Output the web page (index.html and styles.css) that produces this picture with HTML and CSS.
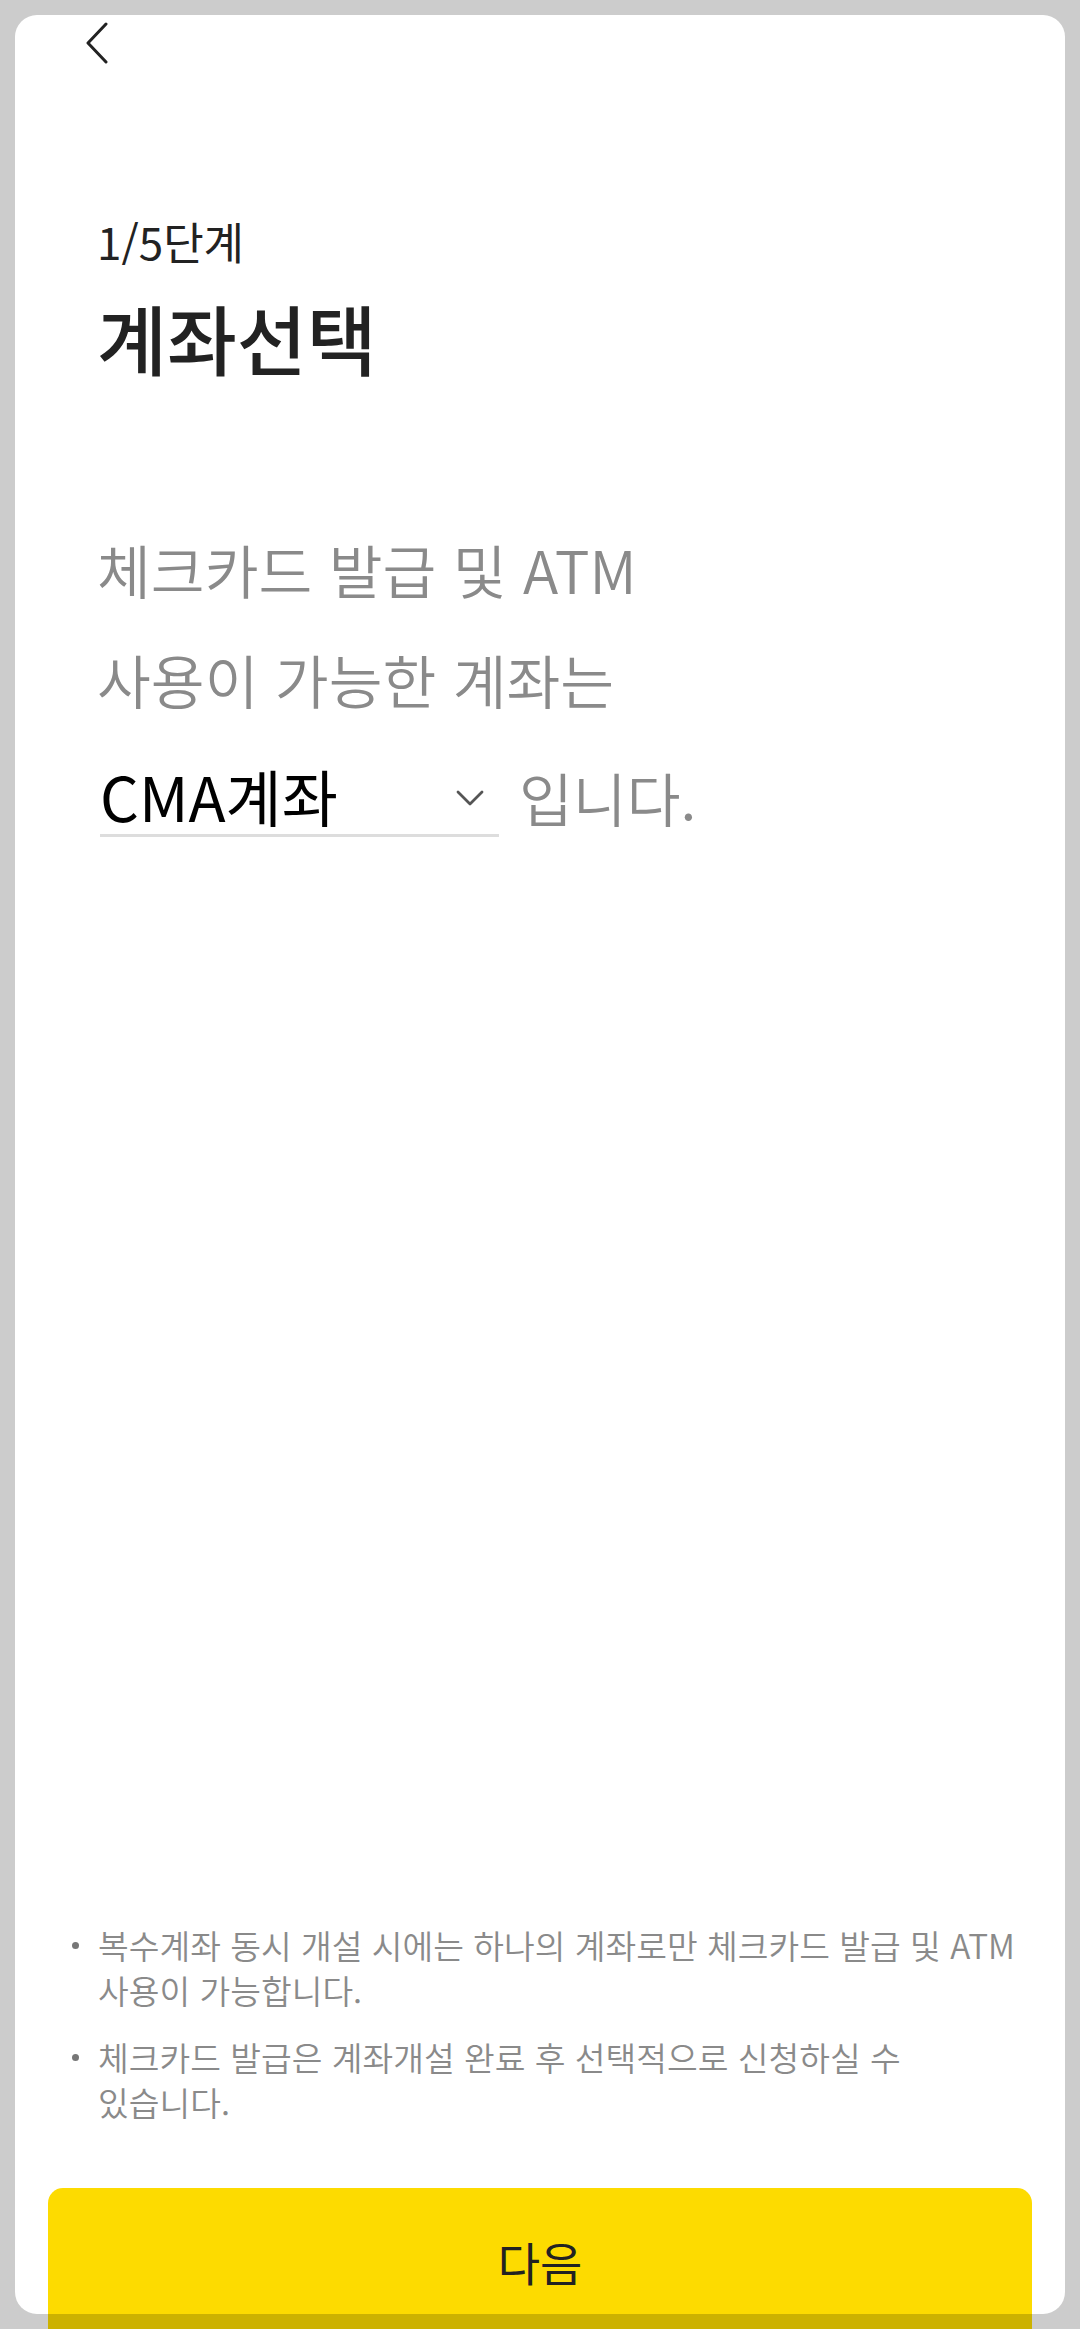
FILE: index.html
```html
<!DOCTYPE html>
<html lang="ko">
<head>
<meta charset="utf-8">
<title>계좌선택</title>
<link rel="stylesheet" href="styles.css">
</head>
<body>
<div class="card">
  <header class="topbar">
    <svg class="back" width="24" height="42" viewBox="0 0 24 42" aria-label="뒤로">
      <polyline points="21,2 3,21 21,40" fill="none" stroke="#222" stroke-width="3" stroke-linecap="round" stroke-linejoin="round"/>
    </svg>
  </header>
  <main class="content">
    <p class="step">1/5단계</p>
    <h1 class="title">계좌선택</h1>
    <div class="sentence">
      <p class="line">체크카드 발급 및 ATM</p>
      <p class="line">사용이 가능한 계좌는</p>
      <div class="line-select">
        <div class="select">
          <span class="select-value">CMA계좌</span>
          <svg class="caret" width="28" height="16" viewBox="0 0 28 16">
            <polyline points="2,2 14,14 26,2" fill="none" stroke="#555" stroke-width="2.8" stroke-linecap="round" stroke-linejoin="round"/>
          </svg>
        </div>
        <span class="tail">입니다.</span>
      </div>
    </div>
  </main>
  <ul class="notes">
    <li class="note"><span class="dot"></span><span class="note-text">복수계좌 동시 개설 시에는 하나의 계좌로만 체크카드 발급 및 ATM<br>사용이 가능합니다.</span></li>
    <li class="note"><span class="dot"></span><span class="note-text">체크카드 발급은 계좌개설 완료 후 선택적으로 신청하실 수<br>있습니다.</span></li>
  </ul>
  <button class="next" type="button">다음</button>
</div>
</body>
</html>
```

FILE: styles.css
```css
html, body {
  margin: 0;
  padding: 0;
}
body {
  background: #cccccc;
  width: 1080px;
  height: 2329px;
  overflow: hidden;
  font-family: "Noto Sans CJK KR", "Noto Sans", sans-serif;
  padding-top: 15px;
  box-sizing: border-box;
}
.card {
  margin: 0 15px;
  height: 2299px;
  background: #ffffff;
  border-radius: 22px;
  display: flex;
  flex-direction: column;
}
.topbar {
  height: 60px;
  padding-left: 70px;
  display: flex;
  align-items: flex-start;
  padding-top: 7px;
  box-sizing: border-box;
}
.back {
  display: block;
}
.content {
  padding-left: 82px;
  padding-top: 140px;
}
.step {
  margin: 0;
  font-size: 44px;
  line-height: 52px;
  color: #222;
  font-weight: 400;
}
.title {
  margin: 23px 0 0 0;
  font-size: 76px;
  line-height: 94px;
  font-weight: 500;
  color: #222;
}
.sentence {
  margin-top: 130px;
  font-size: 58.5px;
  font-weight: 350;
  color: #8a8a8a;
}
.line {
  margin: 0;
  line-height: 110px;
  white-space: nowrap;
}
.line-select {
  margin-top: 27px;
  display: flex;
  align-items: baseline;
  gap: 20px;
}
.select {
  width: 399px;
  height: 73px;
  border-bottom: 3px solid #dddddd;
  display: flex;
  align-items: baseline;
  justify-content: space-between;
  box-sizing: content-box;
  margin-left: 3px;
}
.select-value {
  color: #000;
  font-weight: 400;
  font-size: 61px;
  line-height: 70px;
}
.caret {
  align-self: center;
  margin-right: 15px;
  margin-top: 0;
}
.tail {
  line-height: 70px;
  color: #8a8a8a;
}
.notes {
  margin: auto 0 0 0;
  padding: 0 0 0 57px;
  list-style: none;
}
.note {
  display: flex;
  align-items: flex-start;
  font-size: 33.4px;
  line-height: 45px;
  color: #8a8a8a;
  font-weight: 350;
  white-space: nowrap;
}
.note + .note {
  margin-top: 22px;
}
.dot {
  width: 7px;
  height: 7px;
  border-radius: 50%;
  background: #777777;
  margin-top: 20px;
  margin-right: 19px;
  flex: none;
}
.next {
  margin: 64px 33px -15px 33px;
  height: 141px;
  border: none;
  border-radius: 15px 15px 0 0;
  background: linear-gradient(to bottom, #fddb00 0, #fddb00 126px, #ccb200 126px, #ccb200 100%);
  font-family: "Noto Sans CJK KR", "Noto Sans", sans-serif;
  font-size: 46px;
  line-height: 60px;
  color: #222;
  font-weight: 400;
  padding: 43px 0 0 0;
  display: flex;
  justify-content: center;
  align-items: flex-start;
  flex: none;
}
```
